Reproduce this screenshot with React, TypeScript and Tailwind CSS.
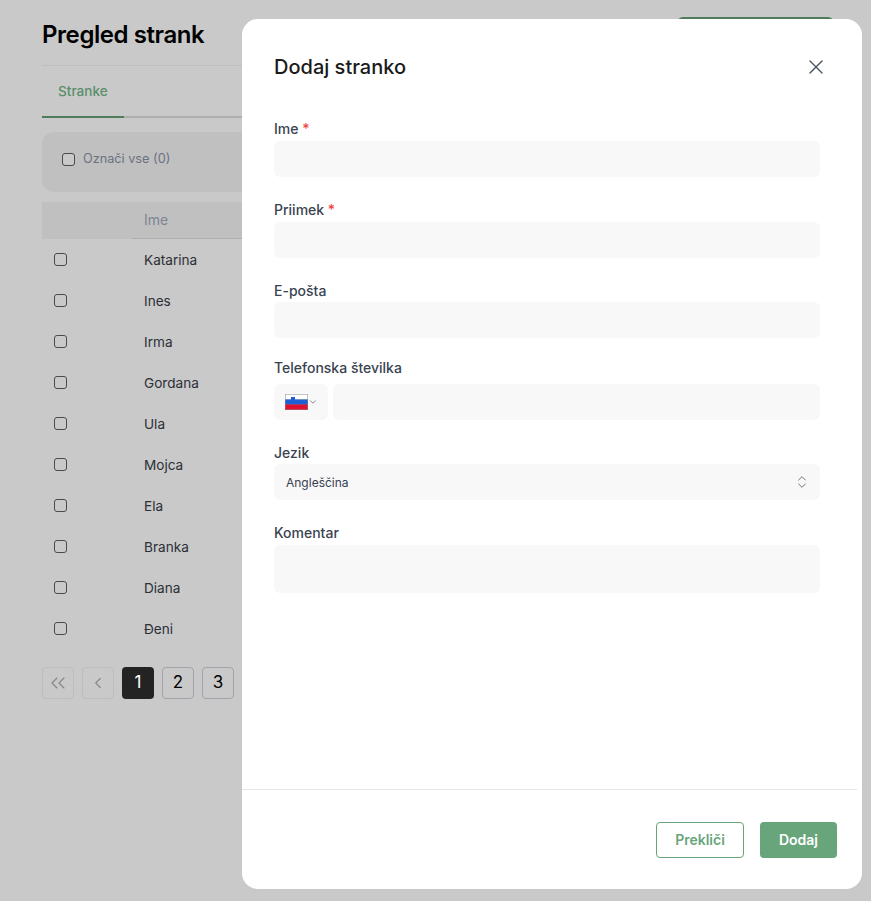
import React from "react";
import { ChevronDown, ChevronLeft, ChevronsLeft, ChevronsUpDown, X } from "lucide-react";

const names = ["Katarina", "Ines", "Irma", "Gordana", "Ula", "Mojca", "Ela", "Branka", "Diana", "Đeni"];

const Checkbox: React.FC = () => (
  <span className="block w-[13px] h-[13px] rounded-[3px] border border-[#4b4b4b] bg-[#c9c9c9]" />
);

const Field: React.FC<{ label: string; required?: boolean; labelClass?: string; children?: React.ReactNode }> = ({
  label,
  required,
  labelClass = "h-[22px]",
  children,
}) => (
  <div className="flex flex-col">
    <label className={`text-sm font-medium leading-5 text-[#3a4350] ${labelClass}`}>
      {label}
      {required && <span className="text-[#ef4444]"> *</span>}
    </label>
    {children ?? <div className="h-9 rounded-md bg-[#f8f8f8]" />}
  </div>
);

const App: React.FC = () => {
  return (
    <div className="relative w-[871px] h-[901px] overflow-hidden bg-[#c9c9c9] font-['Inter',sans-serif]">
      {/* page behind the modal */}
      <div className="px-[42px] pt-[17px]">
        <div className="flex justify-between h-[48px] border-b border-[#bdbdbd] box-content">
          <h1 className="text-2xl font-semibold text-black leading-[36px] tracking-[-0.43px]">Pregled strank</h1>
          <div className="w-[157px] h-9 mr-[-5px] rounded-md bg-[#4f7d5b]" />
        </div>
        <div className="border-b-2 border-[#aeaeae] h-[52px]">
          <div className="w-[82px] h-[52px] border-b-2 border-[#4f7d5b] pl-4 pt-[15px] text-[13.6px] font-medium leading-5 text-[#5b8f6b]">
            Stranke
          </div>
        </div>
        <div className="mt-[14px] h-[60px] rounded-xl bg-[#c0c0c0] flex items-center gap-2 pl-5 pb-[6px]">
          <Checkbox />
          <span className="text-[12.7px] leading-4 text-[#6b7280]">Označi vse (0)</span>
        </div>
        <div className="mt-[10px] flex h-[37px] bg-[#c0c0c0]">
          <div className="w-[90px]" />
          <div className="flex-1 flex items-center border-b border-[#afafaf] pl-3 text-sm text-[#7d8494]">Ime</div>
        </div>
        <div className="flex flex-col">
          {names.map((name) => (
            <div key={name} className="flex items-center h-[41px] pl-3">
              <Checkbox />
              <span className="ml-[77px] mt-[2px] text-[13.6px] text-[#2b2f36]">{name}</span>
            </div>
          ))}
        </div>
        <div className="mt-[18px] flex gap-2">
          <button className="w-8 h-8 rounded border border-[#bdbdbd] flex items-center justify-center text-[#858585]">
            <ChevronsLeft size={24} strokeWidth={1.1} />
          </button>
          <button className="w-8 h-8 rounded border border-[#bdbdbd] flex items-center justify-center text-[#858585]">
            <ChevronLeft size={18} strokeWidth={1.5} />
          </button>
          <button className="w-8 h-8 rounded bg-[#232323] text-white text-[17px]">1</button>
          <button className="w-8 h-8 rounded border border-[#a0a5ab] text-black text-[17px]">2</button>
          <button className="w-8 h-8 rounded border border-[#a0a5ab] text-black text-[17px]">3</button>
        </div>
      </div>

      {/* modal */}
      <div className="absolute left-[242px] top-[19px] w-[620px] h-[870px] rounded-2xl bg-white flex flex-col">
        <div className="flex-1 pl-8 pr-[42px]">
          <div className="flex items-start justify-between pt-[34px] h-[100px]">
            <h2 className="text-xl font-medium text-[#1a1a1a] leading-7">Dodaj stranko</h2>
            <X size={24} strokeWidth={1.4} className="text-[#4b5563] mr-[-8px] mt-[2px]" />
          </div>
          <div className="flex flex-col gap-[23px]">
            <Field label="Ime" required />
            <Field label="Priimek" required />
            <Field label="E-pošta" labelClass="h-[21px]" />
            <div className="mt-[-3px]">
              <Field label="Telefonska številka" labelClass="h-[26px]">
                <div className="flex gap-[5px]">
                  <div className="w-[54px] h-9 rounded-md bg-[#f8f8f8] flex items-center pl-[11px]">
                    <svg width="23" height="16" viewBox="0 0 23 16" className="shrink-0">
                      <rect width="23" height="16" fill="#8a8a8a" />
                      <rect x="0.5" y="0.5" width="22" height="5" fill="#ffffff" />
                      <rect x="0.5" y="5.5" width="22" height="5" fill="#1f5fd6" />
                      <rect x="0.5" y="10.5" width="22" height="5" fill="#e01030" />
                      <path d="M6 3 h4 v3 q-2 2 -4 0 z" fill="#1f5fd6" />
                    </svg>
                    <ChevronDown size={10} className="text-[#6b7280]" />
                  </div>
                  <div className="flex-1 h-9 rounded-md bg-[#f8f8f8]" />
                </div>
              </Field>
            </div>
            <Field label="Jezik" labelClass="h-[21px]">
              <div className="h-9 rounded-md bg-[#f8f8f8] flex items-center justify-between pl-3 pr-[10px] text-xs text-[#374151]">
                <span className="mt-[2px]">Angleščina</span>
                <ChevronsUpDown size={16} strokeWidth={1.5} className="text-[#6b7280]" />
              </div>
            </Field>
            <Field label="Komentar">
              <div className="h-12 rounded-md bg-[#f8f8f8]" />
            </Field>
          </div>
        </div>
        <div className="mr-[5px] border-t border-[#e5e7eb] h-[100px] flex justify-end gap-4 pt-8 pr-5">
          <button className="w-[88px] h-9 rounded border border-[#69a57b] bg-white text-sm font-semibold text-[#69a57b]">
            Prekliči
          </button>
          <button className="w-[77px] h-9 rounded bg-[#69a57b] text-sm font-semibold text-white">Dodaj</button>
        </div>
      </div>
    </div>
  );
};

export default App;
